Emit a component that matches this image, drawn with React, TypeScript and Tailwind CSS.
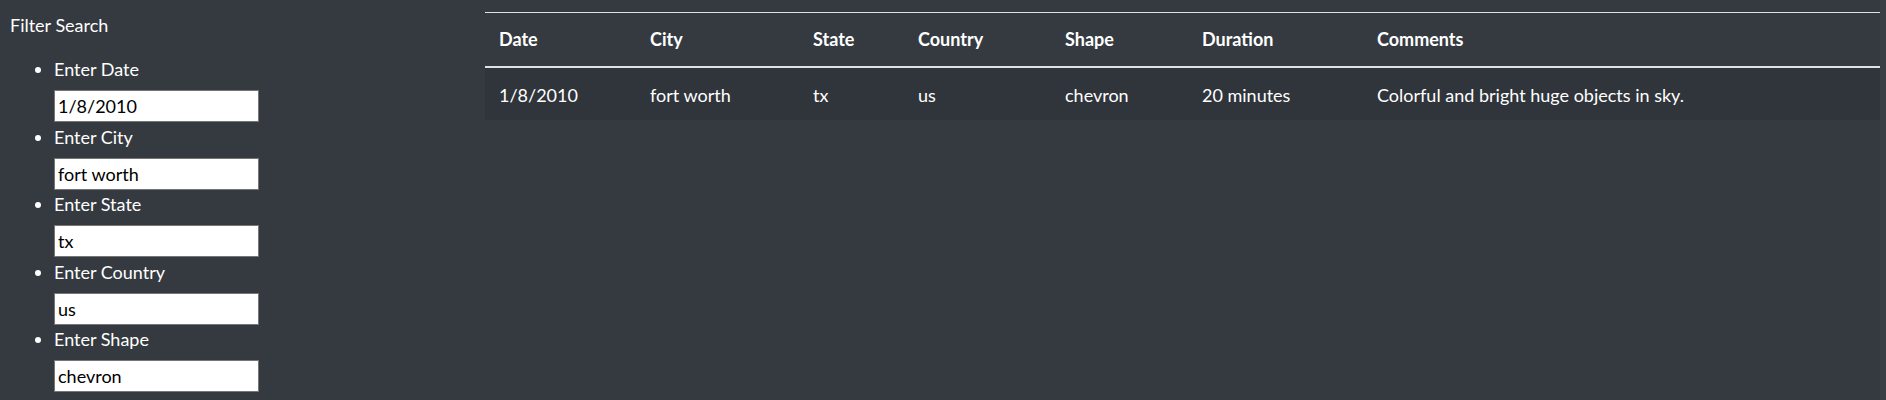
const filters = [
  { label: 'Enter Date', value: '1/8/2010' },
  { label: 'Enter City', value: 'fort worth' },
  { label: 'Enter State', value: 'tx' },
  { label: 'Enter Country', value: 'us' },
  { label: 'Enter Shape', value: 'chevron' },
]

const columns = [
  { name: 'Date', width: 'w-[151px]' },
  { name: 'City', width: 'w-[163px]' },
  { name: 'State', width: 'w-[105px]' },
  { name: 'Country', width: 'w-[147px]' },
  { name: 'Shape', width: 'w-[137px]' },
  { name: 'Duration', width: 'w-[175px]' },
  { name: 'Comments', width: 'w-[517px]' },
]

const rows = [
  ['1/8/2010', 'fort worth', 'tx', 'us', 'chevron', '20 minutes', 'Colorful and bright huge objects in sky.'],
]

function FilterPanel() {
  return (
    <aside className="w-[485px] shrink-0 pl-[10px] pt-[12px]">
      <h2 className="text-[18px] leading-[27px] text-white">Filter Search</h2>
      <ul className="mt-[17px] pl-[25px]">
        {filters.map((f) => (
          <li key={f.label} className="flex text-white">
            <span className="flex h-[27px] w-[19px] shrink-0 items-center">
              <span className="mt-[1px] h-[6px] w-[6px] rounded-full bg-white" />
            </span>
            <div>
              <label className="block h-[27px] text-[18px] leading-[27px]">{f.label}</label>
              <input
                type="text"
                defaultValue={f.value}
                className="mt-[7px] mb-[1.5px] block h-[32px] w-[205px] border border-[#767676] bg-white px-[3px] text-[18px] text-black outline-none"
              />
            </div>
          </li>
        ))}
      </ul>
    </aside>
  )
}

function ResultsTable() {
  return (
    <table className="table-fixed border-collapse text-[18px] leading-[27px] text-white">
      <thead>
        <tr className="border-t border-[#dee2e6]">
          {columns.map((c) => (
            <th
              key={c.name}
              className={`${c.width} border-b-2 border-[#dee2e6] px-[14px] pt-[13px] pb-[13px] text-left font-bold`}
            >
              {c.name}
            </th>
          ))}
        </tr>
      </thead>
      <tbody>
        {rows.map((r, i) => (
          <tr key={i} className="bg-[#30343b]">
            {r.map((cell, j) => (
              <td key={j} className="px-[14px] pt-[14px] pb-[11px]">
                {cell}
              </td>
            ))}
          </tr>
        ))}
      </tbody>
    </table>
  )
}

export default function App() {
  return (
    <div className="flex h-[400px] w-full bg-[#353a41] font-['Lato',sans-serif]">
      <FilterPanel />
      <main className="flex-1 pt-[12px]">
        <ResultsTable />
      </main>
      <div className="w-[6px] shrink-0 bg-[#3a3f46]" />
    </div>
  )
}
